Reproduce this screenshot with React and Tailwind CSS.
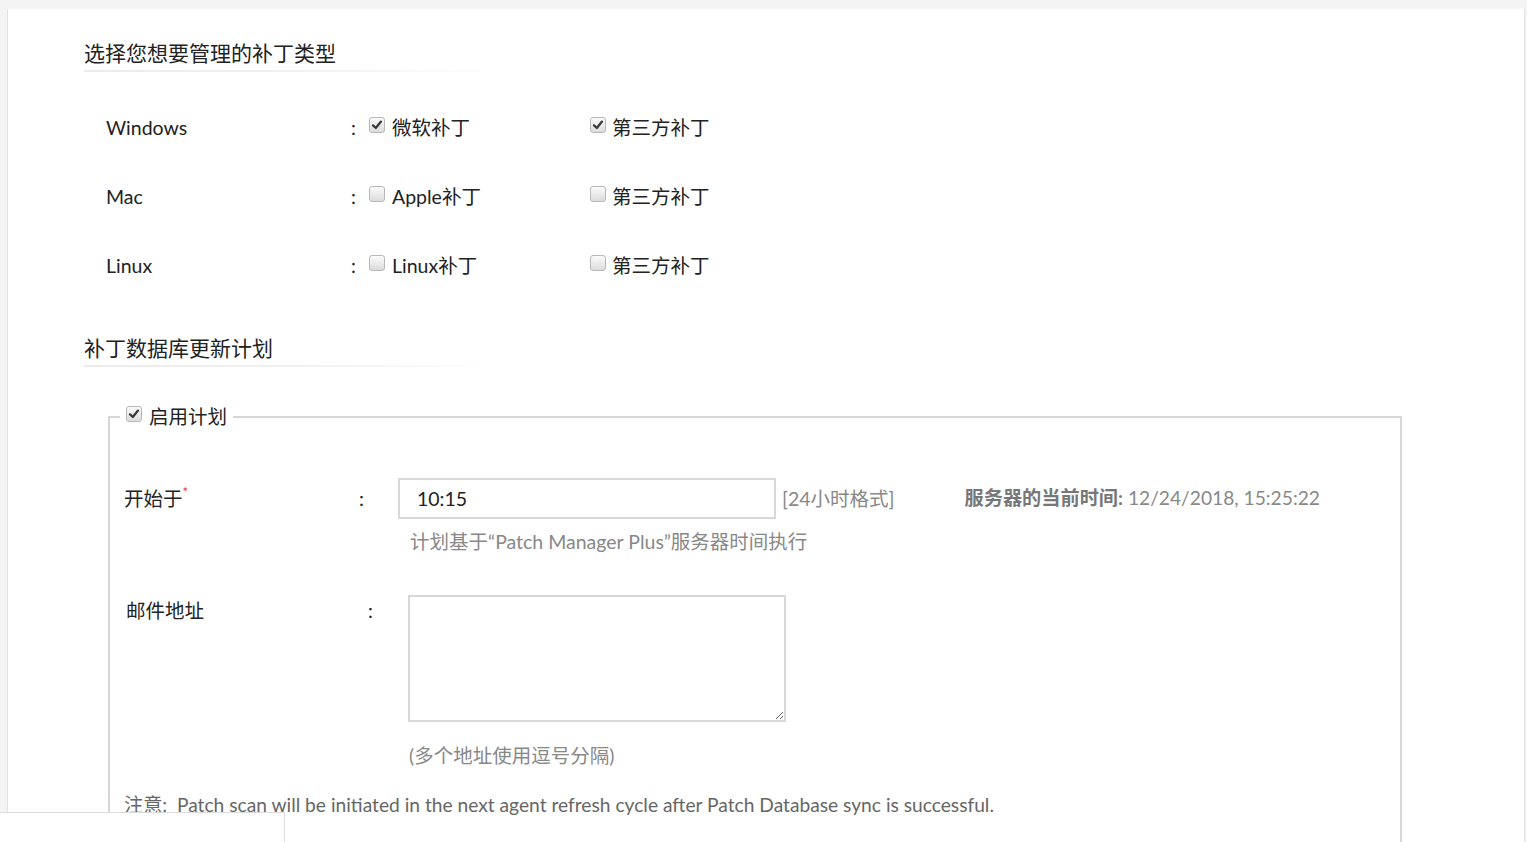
import React from "react";

const Box = ({ checked }) => (
    <span className="inline-flex w-[16px] h-[16px] rounded-[3px] border border-[#b8b8b8] bg-gradient-to-b from-[#fbfbfb] to-[#dcdcdc] items-center justify-center shrink-0 relative top-[-3px]">
        {checked && (
            <svg width="12" height="12" viewBox="0 0 12 12">
                <path d="M2 6.4 L4.8 9 L10 2.6" fill="none" stroke="#3a3a3a" strokeWidth="2.3" strokeLinecap="round" strokeLinejoin="round" />
            </svg>
        )}
    </span>
);

const Heading = ({ children, className = "" }) => (
    <div className={className}>
        <div className="text-[21px] leading-[28px] text-[#222]">{children}</div>
        <div className="mt-[3px] h-[2px] w-[418px] bg-gradient-to-r from-[#ececec] via-[#f0f0f0] to-white"></div>
    </div>
);

const rows = [
    { os: "Windows", first: "微软补丁", a: true, b: true },
    { os: "Mac", first: "Apple补丁", a: false, b: false },
    { os: "Linux", first: "Linux补丁", a: false, b: false },
];

export default function App() {
    return (
        <div className="relative h-[842px] overflow-hidden bg-[#f4f4f4] pt-[9px] pl-[7px] pr-[2px] font-['Lato','Noto_Sans_CJK_SC',sans-serif]">
            <div className="h-[833px] bg-white border-l border-r border-[#e2e2e2] pl-[76px] pt-[30px]">
                {/* Patch types */}
                <Heading>选择您想要管理的补丁类型</Heading>

                <div className="mt-[21px] pl-[22px]">
                    {rows.map((r) => (
                        <div key={r.os} className="flex items-center h-[69px] text-[19.5px] text-[#222]">
                            <span className="w-[245px]">{r.os}</span>
                            <span className="w-[18px]">:</span>
                            <span className="w-[221px] flex items-center gap-[7px]">
                                <Box checked={r.a} />
                                <span>{r.first}</span>
                            </span>
                            <span className="flex items-center gap-[6px]">
                                <Box checked={r.b} />
                                <span>第三方补丁</span>
                            </span>
                        </div>
                    ))}
                </div>

                {/* Update schedule */}
                <Heading className="mt-[34px]">补丁数据库更新计划</Heading>

                <fieldset className="mt-[35px] ml-[24px] w-[1294px] h-[500px] border-2 border-[#d6d6d6] pl-[14px]">
                    <legend className="ml-[-4px] px-[6px] flex items-center gap-[7px] text-[19.5px] text-[#222]">
                        <Box checked />
                        <span>启用计划</span>
                    </legend>

                    <div className="mt-[47px] flex items-start text-[19.5px] text-[#222]">
                        <span className="w-[235px] leading-[41px]">
                            开始于<span className="text-[#e33] text-[13px] align-top relative top-[-6px]">*</span>
                        </span>
                        <span className="w-[39px] leading-[41px]">:</span>
                        <div>
                            <div className="flex items-center">
                                <input
                                    readOnly
                                    value="10:15"
                                    className="w-[378px] h-[41px] border-2 border-[#d8d8d8] pl-[17px] text-[19.5px] text-[#222] outline-none"
                                />
                                <span className="ml-[6px] text-[#888]">[24小时格式]</span>
                                <span className="ml-[70px] text-[19.2px] text-[#888]">
                                    <b className="font-bold text-[#777]">服务器的当前时间:</b> 12/24/2018, 15:25:22
                                </span>
                            </div>
                            <div className="mt-[8px] ml-[12px] text-[#888]">计划基于“Patch Manager Plus”服务器时间执行</div>
                        </div>
                    </div>

                    <div className="mt-[38px] flex items-start text-[19.5px] text-[#222]">
                        <span className="w-[244px] pl-[2px] leading-[32px]">邮件地址</span>
                        <span className="w-[40px] leading-[32px]">:</span>
                        <div>
                            <textarea className="block w-[378px] h-[127px] border-2 border-[#d8d8d8] outline-none"></textarea>
                            <div className="mt-[19px] ml-[1px] text-[#888]">(多个地址使用逗号分隔)</div>
                        </div>
                    </div>

                    <div className="mt-[21px] text-[19.2px] text-[#666]">
                        注意:&nbsp; Patch scan will be initiated in the next agent refresh cycle after Patch Database sync is successful.
                    </div>
                </fieldset>
            </div>

            {/* floating corner panel */}
            <div className="absolute left-0 bottom-0 w-[285px] h-[30px] bg-white border-t border-r border-[#dcdcdc] rounded-tr-[2px]"></div>
        </div>
    );
}
